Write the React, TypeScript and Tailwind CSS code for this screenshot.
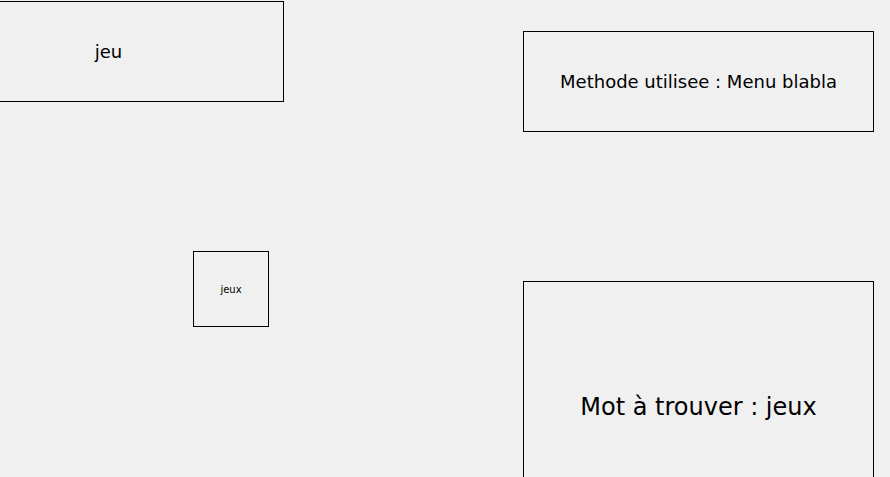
import React from 'react';

const font = { fontFamily: '"DejaVu Sans", Verdana, sans-serif' };

const Box: React.FC<{ className: string; textClass: string; children: React.ReactNode }> = ({
  className,
  textClass,
  children,
}) => (
  <div className={`flex shrink-0 items-center justify-center border border-black ${className}`}>
    <span className={`whitespace-nowrap text-black ${textClass}`}>{children}</span>
  </div>
);

export default function App() {
  return (
    <div className="h-[477px] w-[890px] overflow-hidden bg-[#f0f0f0]" style={font}>
      {/* top row */}
      <div className="flex items-start pt-px">
        <Box className="-ml-[67px] h-[101px] w-[351px]" textClass="text-[18px]">
          jeu
        </Box>
        <Box className="ml-[239px] mt-[30px] h-[101px] w-[351px]" textClass="text-[18px]">
          Methode utilisee : Menu blabla
        </Box>
      </div>

      {/* bottom row */}
      <div className="mt-[119px] flex items-start">
        <Box className="ml-[193px] h-[76px] w-[76px]" textClass="text-[10px]">
          jeux
        </Box>
        <Box className="ml-[254px] mt-[30px] h-[252px] w-[351px]" textClass="text-[24px]">
          Mot à trouver : jeux
        </Box>
      </div>
    </div>
  );
}
